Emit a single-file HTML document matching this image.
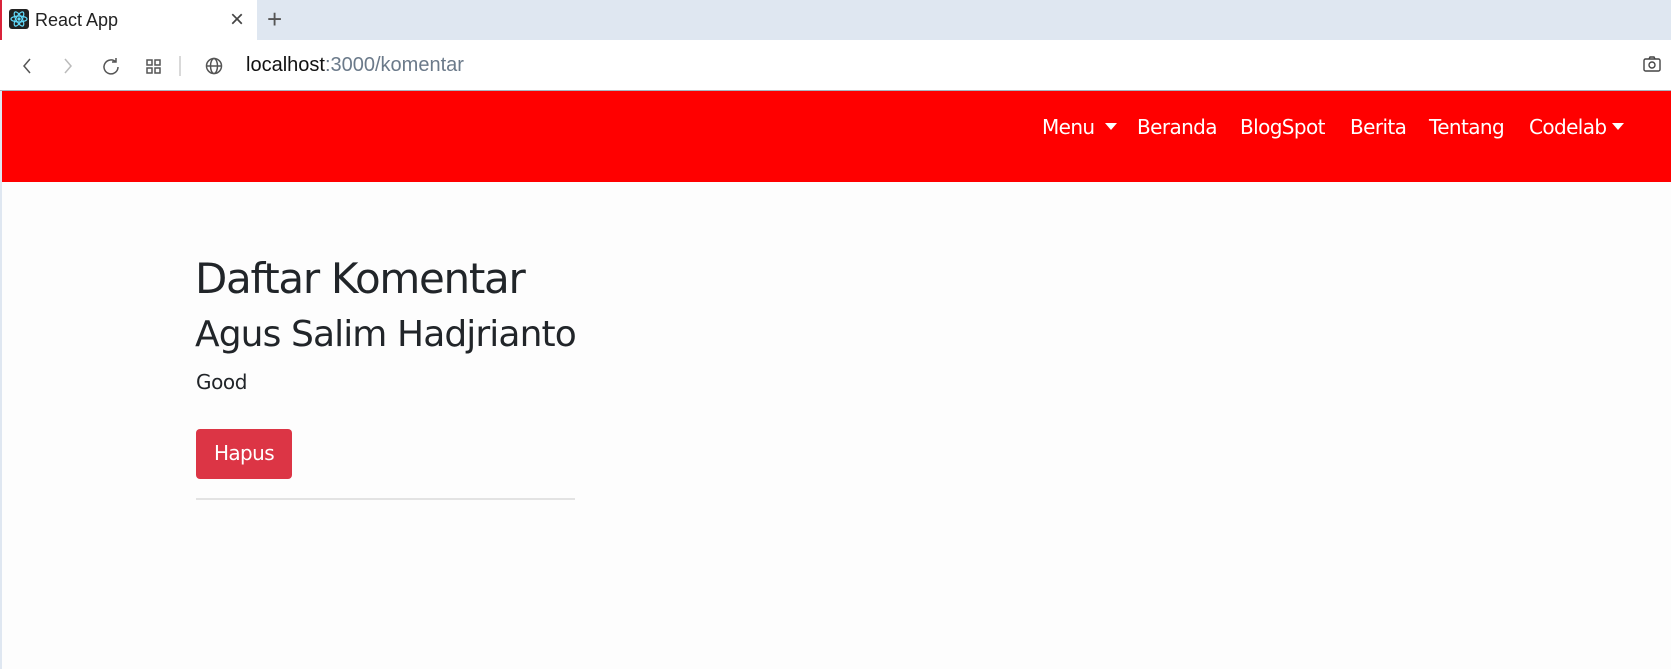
<!DOCTYPE html>
<html><head><meta charset="utf-8"><style>
*{margin:0;padding:0;box-sizing:border-box}
body{width:1671px;height:669px;overflow:hidden;background:#fdfdfd;font-family:"Liberation Sans",sans-serif;position:relative}
.a{position:absolute}
</style></head><body>
<div class="a" style="left:0;top:0;width:1671px;height:40px;background:#dfe7f1"></div>
<div class="a" style="left:0;top:0;width:257px;height:40px;background:#fff"></div>
<div class="a" style="left:0;top:0;width:2px;height:52px;background:#d9233a"></div>
<div class="a" style="left:9px;top:9px;width:20px;height:20px;background:#222;border-radius:3px"><svg width="20" height="20" viewBox="0 0 20 20"><g fill="none" stroke="#61dafb" stroke-width="1.2"><ellipse cx="10" cy="10" rx="8" ry="3"/><ellipse cx="10" cy="10" rx="8" ry="3" transform="rotate(60 10 10)"/><ellipse cx="10" cy="10" rx="8" ry="3" transform="rotate(120 10 10)"/></g><circle cx="10" cy="10" r="1.6" fill="#61dafb"/></svg></div>
<div class="a" style="left:35px;top:10px;font-size:18px;color:#222">React App</div>
<div class="a" style="left:230px;top:6px;font-size:24px;color:#444">×</div>
<div class="a" style="left:267px;top:4px;font-size:26px;color:#555">+</div>
<div class="a" style="left:0;top:40px;width:1671px;height:50px;background:#fff"></div>
<svg class="a" style="left:18px;top:54px" width="260" height="24" viewBox="0 0 260 24" fill="none" stroke="#555" stroke-width="1.5"><path d="M12 5l-6 7 6 7"/><path d="M47 5l6 7-6 7" stroke="#bbb"/><path d="M98 8a7 7 0 1 0 2 5M98 4v4h-4"/><rect x="129" y="6" width="5" height="5"/><rect x="137" y="6" width="5" height="5"/><rect x="129" y="14" width="5" height="5"/><rect x="137" y="14" width="5" height="5"/><path d="M162 2v20" stroke="#ccc"/><circle cx="196" cy="12" r="7.5"/><ellipse cx="196" cy="12" rx="3.5" ry="7.5"/><path d="M189 12h14"/></svg>
<div class="a" style="left:246px;top:54px;font-size:20px;color:#111">localhost<span style="color:#6b7a8a">:3000/komentar</span></div>
<svg class="a" style="left:1643px;top:56px" width="18" height="16" viewBox="0 0 18 16" fill="none" stroke="#444" stroke-width="1.4"><rect x="1" y="3" width="16" height="12" rx="1.5"/><path d="M6 3l1-2h4l1 2"/><circle cx="9" cy="9" r="3"/></svg>
<div class="a" style="left:0;top:90px;width:1671px;height:1px;background:#aab4be"></div>
<div class="a" style="left:0;top:91px;width:2px;height:578px;background:#dfe7f1"></div>
<div class="a" style="left:2px;top:91px;width:1669px;height:91px;background:#ff0000"></div>
<div class="a" style="top:115px;left:0;width:1671px;font-size:20px;color:#fff;font-family:'DejaVu Sans',sans-serif;letter-spacing:-0.6px">
<span class="a" style="left:1042px">Menu</span><span class="a" style="left:1105px;top:8px;border:6px solid transparent;border-top:7px solid #fff"></span>
<span class="a" style="left:1137px">Beranda</span>
<span class="a" style="left:1240px">BlogSpot</span>
<span class="a" style="left:1350px">Berita</span>
<span class="a" style="left:1429px">Tentang</span>
<span class="a" style="left:1529px">Codelab</span><span class="a" style="left:1612px;top:8px;border:6px solid transparent;border-top:7px solid #fff"></span>
</div>
<div class="a" style="left:195px;top:254px;font-size:42px;color:#212529;font-family:'DejaVu Sans',sans-serif;letter-spacing:-1.3px">Daftar Komentar</div>
<div class="a" style="left:195px;top:314px;font-size:36px;color:#212529;font-family:'DejaVu Sans',sans-serif;letter-spacing:-0.9px">Agus Salim Hadjrianto</div>
<div class="a" style="left:196px;top:370px;font-size:20px;color:#212529;font-family:'DejaVu Sans',sans-serif;letter-spacing:-0.4px">Good</div>
<div class="a" style="left:196px;top:429px;width:96px;height:50px;background:#dc3545;border-radius:4px;color:#fff;font-size:20px;font-family:'DejaVu Sans',sans-serif;letter-spacing:-0.6px;text-align:center;line-height:48px">Hapus</div>
<div class="a" style="left:196px;top:498px;width:379px;height:2px;background:#e3e3e3"></div>
</body></html>
